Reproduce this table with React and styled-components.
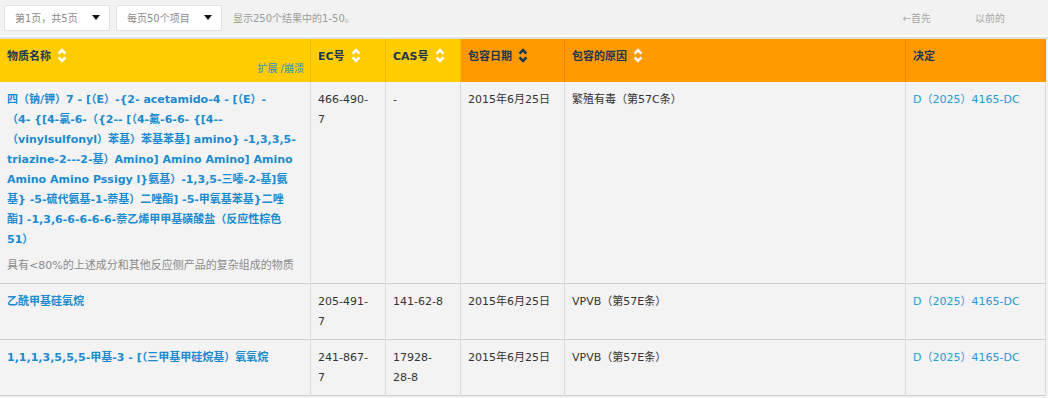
import React from 'react';
import styled, { createGlobalStyle } from 'styled-components';

const GlobalStyle = createGlobalStyle`
  html, body {
    margin: 0;
    background: #f2f2f2;
  }
  body {
    font-family: "DejaVu Sans", "Noto Sans CJK SC", sans-serif;
  }
`;

// the long name keeps the line breaks of the source listing
const rows = [
  {
    name: [
      '四（钠/钾）7 - [（E）-{2- acetamido-4 - [（E）-',
      '（4- {[4-氯-6-（{2-- [（4-氟-6-6- {[4--',
      '（vinylsulfonyl）苯基）苯基苯基] amino} -1,3,3,5-',
      'triazine-2---2-基）Amino] Amino Amino] Amino',
      'Amino Amino Pssigy l}氨基）-1,3,5-三嗪-2-基]氨',
      '基} -5-硫代氨基-1-萘基）二唑酯] -5-甲氧基苯基}二唑',
      '酯] -1,3,6-6-6-6-6-萘乙烯甲甲基磺酸盐（反应性棕色',
      '51）',
    ],
    note: '具有<80%的上述成分和其他反应侧产品的复杂组成的物质',
    ec: '466-490-7',
    cas: '-',
    date: '2015年6月25日',
    reason: '繁殖有毒（第57C条）',
    decision: 'D（2025）4165-DC',
  },
  {
    name: ['乙酰甲基硅氧烷'],
    ec: '205-491-7',
    cas: '141-62-8',
    date: '2015年6月25日',
    reason: 'VPVB（第57E条）',
    decision: 'D（2025）4165-DC',
  },
  {
    name: ['1,1,1,3,5,5,5-甲基-3 - [（三甲基甲硅烷基）氧氧烷'],
    ec: '241-867-7',
    cas: '17928-28-8',
    date: '2015年6月25日',
    reason: 'VPVB（第57E条）',
    decision: 'D（2025）4165-DC',
  },
];

const columns = [
  { label: '物质名称', width: 311, tone: 'yellow', sort: true },
  { label: 'EC号', width: 75, tone: 'yellow', sort: true },
  { label: 'CAS号', width: 75, tone: 'yellow', sort: true },
  { label: '包容日期', width: 104, tone: 'orange', sort: true, active: true },
  { label: '包容的原因', width: 341, tone: 'orange', sort: true },
  { label: '决定', width: 140, tone: 'orange' },
];

function SortIcon({ active }) {
  return (
    <SortSvg width="10" height="15" viewBox="0 0 10 15" $active={active}>
      <polyline points="1.6,5.6 5,2.2 8.4,5.6" />
      <polyline points="1.6,9.4 5,12.8 8.4,9.4" />
    </SortSvg>
  );
}

function Select({ children }) {
  return (
    <SelectBox>
      <span>{children}</span>
      <Caret />
    </SelectBox>
  );
}

function App() {
  return (
    <Page>
      <GlobalStyle />
      <Toolbar>
        <Select>第1页，共5页</Select>
        <Select>每页50个项目</Select>
        <Summary>显示250个结果中的1-50。</Summary>
        <Pager>
          <PagerLink>←首先</PagerLink>
          <PagerLink>以前的</PagerLink>
        </Pager>
      </Toolbar>
      <Divider />
      <Table>
        <colgroup>
          {columns.map((c) => (
            <col key={c.label} style={{ width: c.width }} />
          ))}
        </colgroup>
        <thead>
          <tr>
            {columns.map((c, i) => (
              <Th key={c.label} $tone={c.tone}>
                <HeadLabel>
                  {c.label}
                  {c.sort && <SortIcon active={c.active} />}
                </HeadLabel>
                {i === 0 && <Toggle>扩展 /崩溃</Toggle>}
              </Th>
            ))}
          </tr>
        </thead>
        <tbody>
          {rows.map((r) => (
            <tr key={r.ec}>
              <Td>
                <NameLink>
                  {r.name.map((line, i) => (
                    <React.Fragment key={i}>
                      {i > 0 && <br />}
                      {line}
                    </React.Fragment>
                  ))}
                </NameLink>
                {r.note && <Note>{r.note}</Note>}
              </Td>
              <Td>{r.ec}</Td>
              <Td>{r.cas}</Td>
              <Td>{r.date}</Td>
              <Td>{r.reason}</Td>
              <Td>
                <DecisionLink>{r.decision}</DecisionLink>
              </Td>
            </tr>
          ))}
        </tbody>
      </Table>
    </Page>
  );
}

const Page = styled.div`
  width: 1048px;
  min-height: 398px;
  background: #f2f2f2;
`;

const Toolbar = styled.div`
  display: flex;
  align-items: center;
  height: 35px;
  padding: 0 4px;
  box-sizing: border-box;
  font-size: 10px;
`;

const SelectBox = styled.div`
  display: flex;
  align-items: center;
  justify-content: space-between;
  width: 106px;
  height: 26px;
  box-sizing: border-box;
  margin-right: 6px;
  padding: 0 9px 0 10px;
  background: #fff;
  border: 1px solid #e2e2e2;
  border-radius: 2px;
  color: #8a8a8a;
`;

const Caret = styled.span`
  width: 0;
  height: 0;
  border-left: 4px solid transparent;
  border-right: 4px solid transparent;
  border-top: 5px solid #111;
`;

const Summary = styled.span`
  margin-left: 5px;
  color: #9a9a9a;
`;

const Pager = styled.div`
  display: flex;
  gap: 44px;
  margin-left: auto;
  padding-right: 39px;
`;

const PagerLink = styled.span`
  color: #a8a8a8;
`;

const Divider = styled.div`
  height: 2px;
  background: #fff;
  border-bottom: 2px solid #e0e0e0;
`;

const Table = styled.table`
  width: 1046px;
  table-layout: fixed;
  border-collapse: separate;
  border-spacing: 0;
`;

const Th = styled.th`
  height: 43px;
  box-sizing: border-box;
  padding: 8px 6px 0 7px;
  vertical-align: top;
  text-align: left;
  font-size: 11px;
  font-weight: bold;
  color: #1d3654;
  background: ${(p) => (p.$tone === 'yellow' ? '#ffcc00' : '#ff9900')};
  border-right: 1px solid ${(p) => (p.$tone === 'yellow' ? '#ebbb00' : '#e88a00')};
`;

const HeadLabel = styled.div`
  display: flex;
  align-items: center;
  gap: 6px;
  height: 16px;
`;

const SortSvg = styled.svg`
  fill: none;
  stroke: ${(p) => (p.$active ? '#1d3654' : '#ffffff')};
  stroke-width: 2.6;
  stroke-linecap: butt;
`;

const Toggle = styled.div`
  text-align: right;
  font-size: 10px;
  font-weight: normal;
  line-height: 12px;
  color: #2a8fd0;
`;

const Td = styled.td`
  padding: 8px 12px 7px 7px;
  vertical-align: top;
  font-size: 11px;
  line-height: 20px;
  color: #333;
  background: #f3f3f3;
  border-right: 1px solid #dcdcdc;
  border-bottom: 1px solid #cdd1d5;
`;

const NameLink = styled.a`
  display: block;
  font-size: 11px;
  font-weight: bold;
  color: #1a8bd0;
  cursor: pointer;
`;

const Note = styled.div`
  margin-top: 6px;
  font-size: 11px;
  color: #8a8a8a;
`;

const DecisionLink = styled.a`
  color: #2799d6;
  cursor: pointer;
`;

export default App;
